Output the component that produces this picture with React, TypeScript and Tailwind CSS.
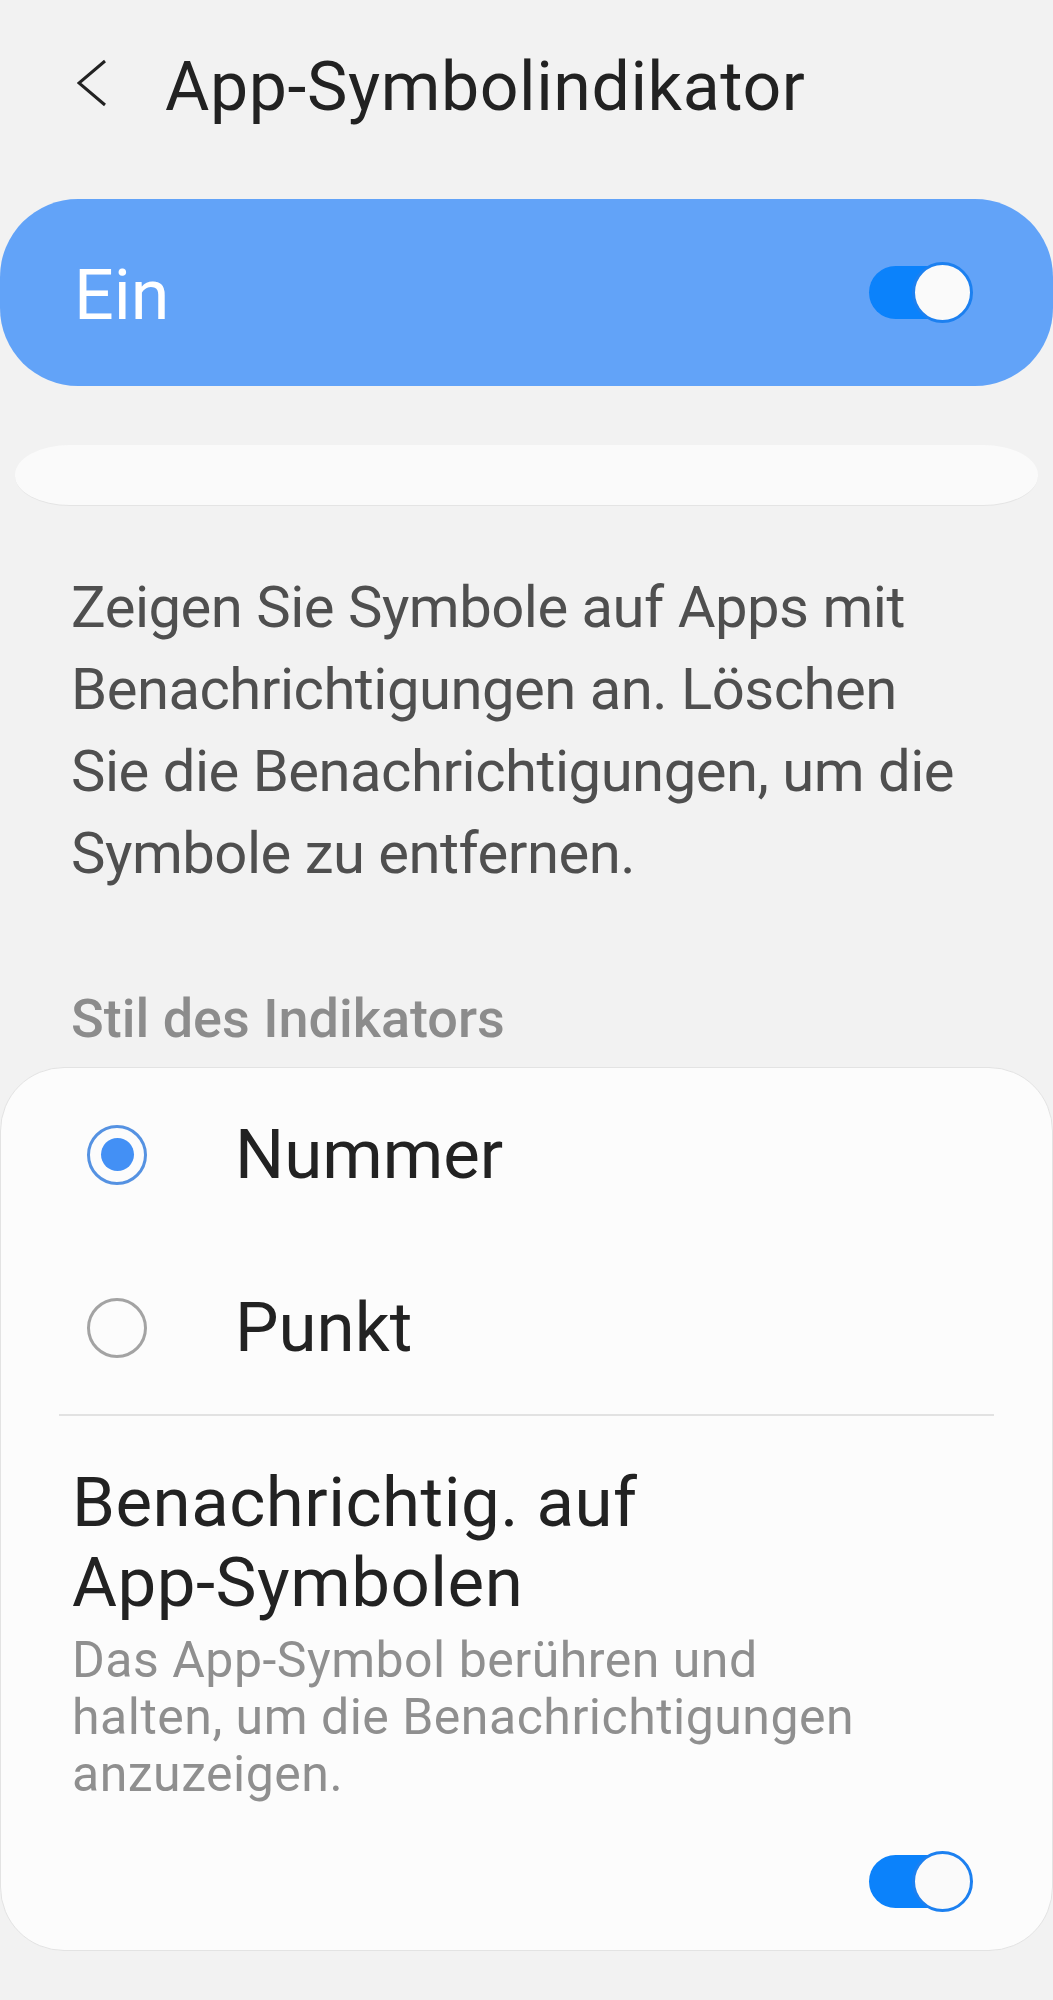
import React from 'react';

const Toggle = () => {
  return (
    <div className="relative w-[104px] h-[61px] shrink-0">
      <div className="absolute left-0 top-[4px] h-[53px] w-[90px] rounded-full bg-[#0b82fb]" />
      <div className="absolute right-0 top-0 h-[61px] w-[61px] rounded-full border-[3px] border-[#1c80f0] bg-[#fafafa]" />
    </div>
  );
};

const Radio = ({ checked }: { checked: boolean }) => {
  if (checked) {
    return (
      <div className="w-[60px] h-[60px] rounded-full border-[3px] border-[#5592e2] flex items-center justify-center shrink-0">
        <div className="w-[33px] h-[33px] rounded-full bg-[#4390f5]" />
      </div>
    );
  }
  return <div className="w-[60px] h-[60px] rounded-full border-[3px] border-[#a3a3a3] shrink-0" />;
};

const App = () => {
  return (
    <div className="w-[1053px] min-h-[2000px] bg-[#f2f2f2] font-[Roboto,sans-serif] overflow-hidden">
      {/* header */}
      <div className="h-[199px] pt-[54px] flex items-start">
        <svg width="30" height="48" viewBox="0 0 30 48" className="ml-[77px] mt-[5px] shrink-0">
          <polyline points="28,2 2,24 28,46" fill="none" stroke="#222222" strokeWidth="3" />
        </svg>
        <h1 className="ml-[58px] text-[68px] leading-[66px] tracking-[0.6px] text-[#222222] whitespace-nowrap">
          App-Symbolindikator
        </h1>
      </div>

      {/* master switch */}
      <div className="h-[187px] rounded-[78px] bg-[#62a3f8] flex items-center justify-between pl-[74px] pr-[80px]">
        <span className="text-[70px] leading-[70px] text-white pt-[4px]">Ein</span>
        <Toggle />
      </div>

      <div className="mt-[59px] mx-[15px] h-[61px] rounded-[55px/30px] bg-[#fafafa] border-b border-[#e4e4e4]" />

      <p className="mt-[60px] px-[71px] text-[58px] leading-[82px] tracking-[-0.5px] text-[#4f4f4f] whitespace-nowrap">
        <span className="block">Zeigen Sie Symbole auf Apps mit</span>
        <span className="block">Benachrichtigungen an. Löschen</span>
        <span className="block">Sie die Benachrichtigungen, um die</span>
        <span className="block">Symbole zu entfernen.</span>
      </p>

      <h2 className="mt-[97px] px-[71px] text-[54px] leading-[55px] font-medium text-[#8c8c8c] whitespace-nowrap">
        Stil des Indikators
      </h2>

      {/* card */}
      <div className="mt-[21px] h-[884px] rounded-[64px] border border-[#e3e3e3] bg-[#fcfcfc] flex flex-col">
        <div className="h-[173px] flex items-center pl-[86px]">
          <Radio checked />
          <span className="ml-[88px] text-[69px] leading-[69px] text-[#222222]">Nummer</span>
        </div>
        <div className="h-[173px] flex items-center pl-[86px]">
          <Radio checked={false} />
          <span className="ml-[88px] text-[69px] leading-[69px] text-[#222222]">Punkt</span>
        </div>
        <div className="mx-[58px] h-[2px] bg-[#e2e2e2]" />

        <div className="pt-[47px] px-[71px] whitespace-nowrap">
          <div className="text-[69px] leading-[80px] tracking-[0.5px] text-[#222222]">
            <span className="block">Benachrichtig. auf</span>
            <span className="block">App-Symbolen</span>
          </div>
          <div className="mt-[9px] text-[50px] leading-[57px] tracking-[0.5px] text-[#8f8f8f]">
            <span className="block">Das App-Symbol berühren und</span>
            <span className="block">halten, um die Benachrichtigungen</span>
            <span className="block">anzuzeigen.</span>
          </div>
        </div>
        <div className="mt-[48px] flex justify-end pr-[79px]">
          <Toggle />
        </div>
      </div>
    </div>
  );
};

export default App;
